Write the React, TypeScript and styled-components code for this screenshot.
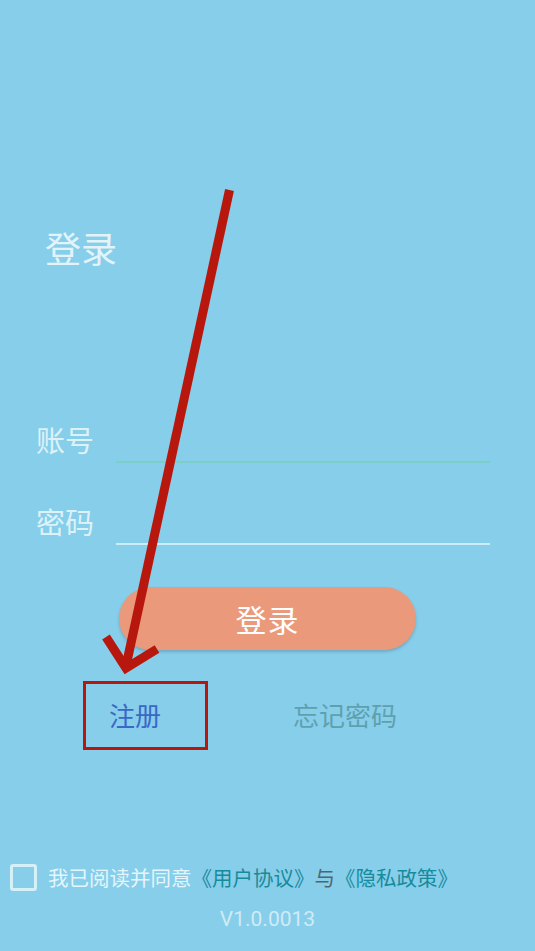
import React from "react";
import styled, { createGlobalStyle } from "styled-components";

const GlobalStyle = createGlobalStyle`
  html, body {
    margin: 0;
    padding: 0;
    background-color: #87ceea;
  }
  * {
    box-sizing: border-box;
  }
`;

const Page = styled.div`
  position: relative;
  display: flex;
  flex-direction: column;
  min-height: 100vh;
  background-color: #87ceea;
  font-family: "Noto Sans CJK SC", "Noto Sans", sans-serif;
  overflow: hidden;
`;

const Title = styled.h1`
  margin: 225px 0 0 0;
  padding-left: 45px;
  font-size: 36px;
  line-height: 44px;
  font-weight: normal;
  color: #e2f4fa;
`;

const Form = styled.div`
  display: flex;
  flex-direction: column;
  gap: 34px;
  margin-top: 146px;
`;

const Row = styled.div`
  display: flex;
  align-items: center;
  height: 48px;
  padding: 0 45px 0 36px;
`;

const Label = styled.span`
  width: 80px;
  font-size: 29px;
  line-height: 40px;
  color: #dcf2f9;
`;

const Input = styled.input<{ $focused?: boolean }>`
  flex: 1;
  align-self: stretch;
  border: none;
  border-bottom: 2px solid ${(p) => (p.$focused ? "#7bcfc6" : "#cdeef8")};
  background: transparent;
  outline: none;
  font-size: 22px;
  color: #ffffff;
  font-family: inherit;
`;

const LoginButton = styled.button`
  display: block;
  width: 297px;
  height: 63px;
  margin: 42px auto 0 auto;
  border: none;
  border-radius: 32px;
  background-color: #eb997b;
  box-shadow: 0 2px 3px rgba(60, 90, 110, 0.3);
  color: #ffffff;
  font-family: inherit;
  font-size: 31px;
  letter-spacing: 1px;
`;

const Links = styled.div`
  display: flex;
  align-items: center;
  gap: 132px;
  margin-top: 47px;
  padding-left: 109px;
`;

const LinkText = styled.span<{ $color: string }>`
  font-size: 26px;
  line-height: 36px;
  color: ${(p) => p.$color};
`;

const Footer = styled.div`
  display: flex;
  flex-direction: column;
  margin-top: auto;
  padding-bottom: 20px;
`;

const Agree = styled.div`
  display: flex;
  align-items: center;
  gap: 11px;
  padding-left: 10px;
  font-size: 20.5px;
  line-height: 28px;
  color: #e4f5fb;
  white-space: nowrap;
`;

const CheckBox = styled.span`
  display: block;
  flex-shrink: 0;
  width: 27px;
  height: 27px;
  border: 3px solid #d6f0f8;
  border-radius: 3px;
`;

const Doc = styled.span<{ $muted?: boolean }>`
  color: ${(p) => (p.$muted ? "#4f6672" : "#178b9b")};
`;

const Version = styled.div`
  margin-top: 16px;
  text-align: center;
  font-family: Roboto, "Noto Sans", sans-serif;
  font-size: 21px;
  line-height: 24px;
  color: #d0ebf6;
`;

const Annotation = styled.svg`
  position: absolute;
  left: 0;
  top: 0;
  width: 535px;
  height: 951px;
  pointer-events: none;
`;

export default function App() {
  return (
    <>
      <GlobalStyle />
      <Page>
        <Title>登录</Title>
        <Form>
          <Row>
            <Label>账号</Label>
            <Input $focused />
          </Row>
          <Row>
            <Label>密码</Label>
            <Input type="password" />
          </Row>
        </Form>
        <LoginButton>登录</LoginButton>
        <Links>
          <LinkText $color="#3b67c6">注册</LinkText>
          <LinkText $color="#5ea1ae">忘记密码</LinkText>
        </Links>
        <Footer>
          <Agree>
            <CheckBox />
            <span>
              我已阅读并同意<Doc>《用户协议》</Doc>
              <Doc $muted>与</Doc>
              <Doc>《隐私政策》</Doc>
            </span>
          </Agree>
          <Version>V1.0.0013</Version>
        </Footer>
        <Annotation viewBox="0 0 535 951">
          <g stroke="#b8170e" fill="none">
            <line x1="229.5" y1="190" x2="126" y2="666" strokeWidth="9" />
            <polyline points="106,637 126,668 157,649" strokeWidth="9" strokeLinejoin="miter" />
            <rect x="84.5" y="682.5" width="122" height="66" strokeWidth="3" />
          </g>
        </Annotation>
      </Page>
    </>
  );
}
